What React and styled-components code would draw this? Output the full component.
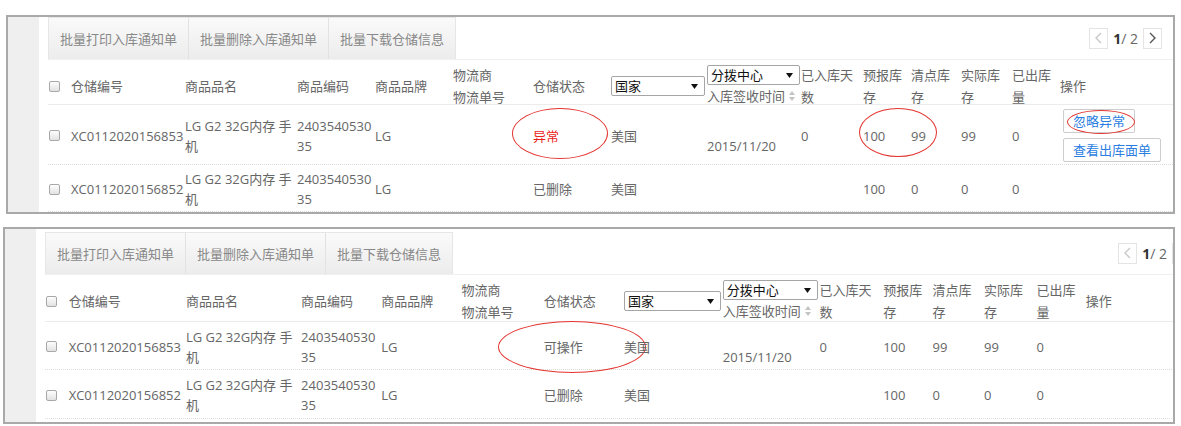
import React from 'react';
import styled, { createGlobalStyle } from 'styled-components';

const GlobalStyle = createGlobalStyle`
  html, body {
    margin: 0;
    padding: 0;
    background: #fff;
  }
  body {
    font-family: "Open Sans", "Noto Sans CJK SC", sans-serif;
    font-size: 13px;
    color: #666;
  }
`;

const COLS = [23, 114, 112, 78, 78, 80, 78, 96, 94, 62, 48, 50, 51, 48, 113]
  .map((w) => `minmax(0, ${w}fr)`)
  .join(' ');

const Page = styled.div`
  padding-top: 15px;
`;

const Panel = styled.section`
  margin: ${(p) => p.$top}px 0 0 ${(p) => p.$left}px;
  width: ${(p) => p.$width}px;
  box-sizing: border-box;
  border: 2px solid #a9a9a9;
  display: flex;
  overflow: hidden;
`;

const Strip = styled.div`
  width: 31px;
  flex: none;
  background: #efefef;
`;

const Body = styled.div`
  flex: 1;
  min-width: 0;
  overflow: hidden;
  padding: ${(p) => p.$padTop}px 0 ${(p) => p.$padBottom}px 9px;
`;

const Inner = styled.div`
  width: ${(p) => p.$width}px;
`;

const ToolRow = styled.div`
  display: flex;
  align-items: center;
  justify-content: space-between;
  height: 43px;
  box-sizing: border-box;
  border-bottom: 1px solid #f0f0f0;
`;

const ToolGroup = styled.div`
  display: flex;
  align-self: stretch;
  background: linear-gradient(#fafafa, #ececec);
  border: 1px solid #e6e6e6;
  border-bottom: none;
`;

const ToolButton = styled.div`
  display: flex;
  align-items: center;
  padding: 0 11px;
  color: #888;
  border-left: 1px solid #e2e2e2;
  &:first-child {
    border-left: none;
  }
`;

const Pager = styled.div`
  display: flex;
  align-items: center;
  gap: 5px;
  margin-right: 11px;
`;

const PageBtn = styled.div`
  width: 19px;
  height: 21px;
  box-sizing: border-box;
  border: 1px solid #e4e4e4;
  display: flex;
  align-items: center;
  justify-content: center;
  background: #fff;
`;

const PageText = styled.span`
  font-size: 14px;
  color: #666;
  b {
    color: #333;
    font-weight: 700;
  }
`;

const Cell = styled.div`
  position: relative;
  display: flex;
  flex-direction: ${(p) => (p.$stack ? 'column' : 'row')};
  align-items: ${(p) => (p.$stack ? 'flex-start' : 'center')};
  justify-content: ${(p) => (p.$stack ? 'center' : 'flex-start')};
  min-width: 0;
  word-break: break-all;
  padding-top: ${(p) => p.$drop || 0}px;
  color: ${(p) => (p.$alert ? '#e8231b' : '#666')};
`;

const Row = styled.div`
  display: grid;
  grid-template-columns: ${COLS};
  height: ${(p) => p.$h}px;
  box-sizing: border-box;
  padding-top: 2px;
  line-height: 20px;
  border-bottom: 1px dotted #dcdcdc;
`;

const HeadRow = styled(Row)`
  padding-top: 4px;
  line-height: 22px;
  border-bottom: 1px solid #ececec;
  & > ${Cell} {
    padding-right: 2px;
  }
`;

const Check = styled.span`
  width: 11px;
  height: 11px;
  margin-left: 1px;
  box-sizing: border-box;
  border: 1px solid #a8a8a8;
  border-radius: 2px;
  background: linear-gradient(#fdfdfd, #e2e2e2);
`;

const Select = styled.div`
  width: 100%;
  height: 20px;
  box-sizing: border-box;
  display: flex;
  align-items: center;
  justify-content: space-between;
  padding: 0 6px 0 3px;
  border: 1px solid #a5a5a5;
  border-radius: 2px;
  background: #fff;
  color: #111;
  line-height: 18px;
`;

const SelectSlot = styled.div`
  width: calc(100% + 1px);
`;

const SortLine = styled.span`
  display: flex;
  align-items: center;
  gap: 4px;
`;

const Annot = styled.span`
  position: absolute;
  left: ${(p) => p.$x}px;
  top: ${(p) => p.$y}px;
  width: ${(p) => p.$w}px;
  height: ${(p) => p.$h}px;
  box-sizing: border-box;
  border: 1.5px solid #e3342f;
  border-radius: 50%;
  pointer-events: none;
`;

const OpList = styled.div`
  display: flex;
  flex-direction: column;
  align-items: flex-start;
  gap: 5px;
  margin-left: 3px;
`;

const OpButton = styled.span`
  position: relative;
  height: 24px;
  box-sizing: border-box;
  display: inline-flex;
  align-items: center;
  padding: 0 9px;
  border: 1px solid #cdcdcd;
  border-radius: 2px;
  background: #fff;
  color: #2a7de1;
`;

const Caret = () => (
  <svg width="7" height="5" viewBox="0 0 7 5">
    <path d="M0 0h7L3.5 5z" fill="#111" />
  </svg>
);

const SortIcon = () => (
  <svg width="6" height="10" viewBox="0 0 6 10">
    <path d="M3 0L6 4H0z M3 10L0 6h6z" fill="#c4c4c4" />
  </svg>
);

const Chevron = ({ dir, color }) => (
  <svg width="7" height="12" viewBox="0 0 7 12">
    <path
      d={dir === 'left' ? 'M6 1L1 6l5 5' : 'M1 1l5 5-5 5'}
      fill="none"
      stroke={color}
      strokeWidth="1.4"
    />
  </svg>
);

const note = (n) => n && <Annot $x={n.x} $y={n.y} $w={n.w} $h={n.h} />;

function Head({ height }) {
  return (
    <HeadRow $h={height}>
      <Cell><Check /></Cell>
      <Cell>仓储编号</Cell>
      <Cell>商品品名</Cell>
      <Cell>商品编码</Cell>
      <Cell>商品品牌</Cell>
      <Cell $stack>
        <span>物流商</span>
        <span>物流单号</span>
      </Cell>
      <Cell>仓储状态</Cell>
      <Cell>
        <SelectSlot>
          <Select>国家<Caret /></Select>
        </SelectSlot>
      </Cell>
      <Cell $stack>
        <SelectSlot>
          <Select>分拨中心<Caret /></Select>
        </SelectSlot>
        <SortLine>入库签收时间<SortIcon /></SortLine>
      </Cell>
      <Cell>已入库天数</Cell>
      <Cell>预报库存</Cell>
      <Cell>清点库存</Cell>
      <Cell>实际库存</Cell>
      <Cell>已出库量</Cell>
      <Cell>操作</Cell>
    </HeadRow>
  );
}

function Line({ row, height }) {
  const n = row.notes || {};
  return (
    <Row $h={height}>
      <Cell><Check /></Cell>
      <Cell>{row.id}</Cell>
      <Cell>{row.name}</Cell>
      <Cell>{row.code}</Cell>
      <Cell>{row.brand}</Cell>
      <Cell />
      <Cell $alert={row.alert}>
        {row.status}
        {note(n.status)}
      </Cell>
      <Cell>{row.country}</Cell>
      <Cell $drop={20}>{row.date}</Cell>
      <Cell>{row.days}</Cell>
      <Cell>
        {row.pre}
        {note(n.stock)}
      </Cell>
      <Cell>{row.counted}</Cell>
      <Cell>{row.actual}</Cell>
      <Cell>{row.out}</Cell>
      <Cell>
        {row.ops && (
          <OpList>
            <OpButton>
              忽略异常
              {note(n.op)}
            </OpButton>
            <OpButton>查看出库面单</OpButton>
          </OpList>
        )}
      </Cell>
    </Row>
  );
}

const base = {
  name: 'LG G2 32G内存 手机',
  code: '240354053035',
  brand: 'LG',
  country: '美国',
};

const panels = [
  {
    top: 0,
    left: 6,
    width: 1169,
    inner: 1125,
    padTop: 0,
    padBottom: 0,
    head: 45,
    heights: [60, 47],
    rows: [
      {
        ...base,
        id: 'XC0112020156853',
        status: '异常',
        alert: true,
        date: '2015/11/20',
        days: '0',
        pre: '100',
        counted: '99',
        actual: '99',
        out: '0',
        ops: true,
        notes: {
          status: { x: -21, y: 1, w: 96, h: 51 },
          stock: { x: -4, y: 1, w: 78, h: 49 },
          op: { x: 3, y: 0, w: 68, h: 24 },
        },
      },
      { ...base, id: 'XC0112020156852', status: '已删除', pre: '100', counted: '0', actual: '0', out: '0' },
    ],
  },
  {
    top: 13,
    left: 3,
    width: 1172,
    inner: 1157,
    padTop: 3,
    padBottom: 3,
    head: 47,
    heights: [48, 49],
    rows: [
      {
        ...base,
        id: 'XC0112020156853',
        status: '可操作',
        date: '2015/11/20',
        days: '0',
        pre: '100',
        counted: '99',
        actual: '99',
        out: '0',
        notes: {
          status: { x: -46, y: -3, w: 148, h: 52 },
        },
      },
      { ...base, id: 'XC0112020156852', status: '已删除', pre: '100', counted: '0', actual: '0', out: '0' },
    ],
  },
];

function StockPanel({ cfg }) {
  return (
    <Panel $top={cfg.top} $left={cfg.left} $width={cfg.width}>
      <Strip />
      <Body $padTop={cfg.padTop} $padBottom={cfg.padBottom}>
        <Inner $width={cfg.inner}>
          <ToolRow>
            <ToolGroup>
              <ToolButton>批量打印入库通知单</ToolButton>
              <ToolButton>批量删除入库通知单</ToolButton>
              <ToolButton>批量下载仓储信息</ToolButton>
            </ToolGroup>
            <Pager>
              <PageBtn><Chevron dir="left" color="#c8c8c8" /></PageBtn>
              <PageText><b>1</b>/ 2</PageText>
              <PageBtn><Chevron dir="right" color="#555" /></PageBtn>
            </Pager>
          </ToolRow>
          <Head height={cfg.head} />
          {cfg.rows.map((row, i) => (
            <Line key={row.id} row={row} height={cfg.heights[i]} />
          ))}
        </Inner>
      </Body>
    </Panel>
  );
}

export default function App() {
  return (
    <Page>
      <GlobalStyle />
      {panels.map((cfg, i) => (
        <StockPanel key={i} cfg={cfg} />
      ))}
    </Page>
  );
}
